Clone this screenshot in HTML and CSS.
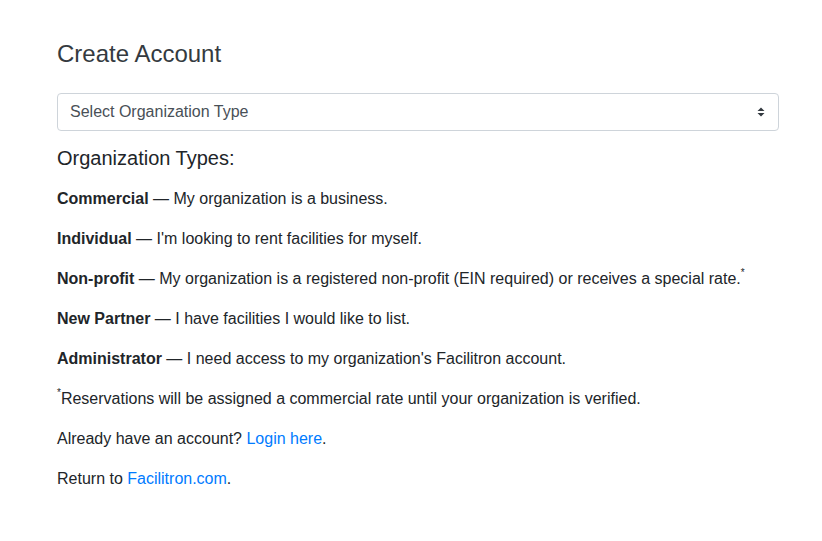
FILE: index.html
```html
<!DOCTYPE html>
<html>
<head>
<meta charset="utf-8">
<link rel="stylesheet" href="styles.css">
</head>
<body>
<div class="container">
  <h4 class="title">Create Account</h4>
  <div class="select-wrap">
    <select class="custom-select">
      <option>Select Organization Type</option>
    </select>
    <svg class="caret" width="8" height="10" viewBox="0 0 8 10"><path d="M4 0.5 L7.5 4 H0.5 Z M4 9.5 L7.5 6 H0.5 Z" fill="#343a40"/></svg>
  </div>
  <h5 class="subtitle">Organization Types:</h5>
  <p><b>Commercial</b> — My organization is a business.</p>
  <p><b>Individual</b> — I'm looking to rent facilities for myself.</p>
  <p><b>Non-profit</b> — My organization is a registered non-profit (EIN required) or receives a special rate.<sup>*</sup></p>
  <p><b>New Partner</b> — I have facilities I would like to list.</p>
  <p><b>Administrator</b> — I need access to my organization's Facilitron account.</p>
  <p><sup>*</sup>Reservations will be assigned a commercial rate until your organization is verified.</p>
  <p>Already have an account? <a href="#">Login here</a>.</p>
  <p>Return to <a href="#">Facilitron.com</a>.</p>
</div>
</body>
</html>
```
FILE: styles.css
```css
* { box-sizing: border-box; }
html, body {
  margin: 0;
  padding: 0;
  background: #fff;
}
body {
  font-family: "Liberation Sans", Arial, Helvetica, sans-serif;
  font-size: 16px;
  line-height: 1.5;
  color: #212529;
}
.container {
  width: 722px;
  margin: 0 0 0 57px;
  padding-top: 40px;
}
.title {
  margin: 0 0 24px;
  font-size: 24px;
  font-weight: 400;
  line-height: 1.2;
  color: #343a40;
}
.select-wrap {
  position: relative;
  margin-bottom: 15px;
}
.custom-select {
  display: block;
  width: 100%;
  height: 38px;
  padding: 6px 28px 6px 12px;
  font-family: inherit;
  font-size: 16px;
  line-height: 1.5;
  color: #495057;
  background: #fff;
  border: 1px solid #ced4da;
  border-radius: 4px;
  -webkit-appearance: none;
  appearance: none;
}
.caret {
  position: absolute;
  right: 14px;
  top: 14px;
  pointer-events: none;
}
.subtitle {
  margin: 0 0 17px;
  font-size: 20px;
  font-weight: 400;
  line-height: 1.2;
  color: #212529;
}
p {
  margin: 0 0 16px;
}
b { font-weight: 700; }
sup {
  font-size: 10px;
  line-height: 0;
  position: relative;
  vertical-align: baseline;
  top: -8px;
}
a {
  color: #007bff;
  text-decoration: none;
}
```
